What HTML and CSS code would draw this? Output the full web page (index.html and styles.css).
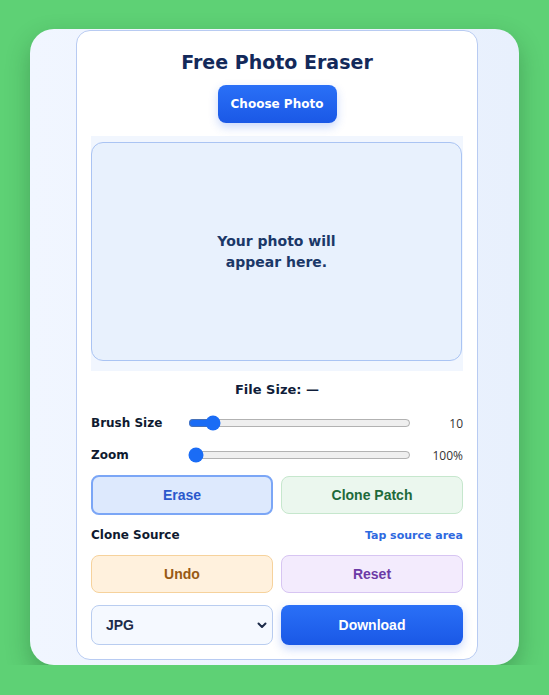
FILE: index.html
```html
<!DOCTYPE html>
<html lang="en">

<head>
    <meta charset="UTF-8">
    <meta name="viewport" content="width=device-width, initial-scale=1.0">
    <title>Free Photo Eraser</title>
    <link rel="stylesheet" href="styles.css">
</head>

<body>

    <div class="shell">
        <div class="eraser_card">
            <h1 class="eraser_title">Free Photo Eraser</h1>
            <div class="choose_wrap">
                <button class="btn_primary choose_btn">Choose Photo</button>
            </div>

            <div class="preview_wrap">
                <div class="preview_box">
                    <p class="preview_text">Your photo will<br>appear here.</p>
                </div>
            </div>

            <div class="file_size">File Size: —</div>

            <div class="sliders">
                <div class="slider_row">
                    <label class="row_label">Brush Size</label>
                    <input type="range" class="slider" min="2" max="100" value="10">
                    <span class="slider_value">10</span>
                </div>
                <div class="slider_row">
                    <label class="row_label">Zoom</label>
                    <input type="range" class="slider" min="100" max="400" value="100">
                    <span class="slider_value">100%</span>
                </div>
            </div>

            <div class="btn_pair">
                <button class="tool_btn erase_btn">Erase</button>
                <button class="tool_btn clone_btn">Clone Patch</button>
            </div>

            <div class="clone_row">
                <span class="row_label">Clone Source</span>
                <span class="clone_hint">Tap source area</span>
            </div>

            <div class="btn_pair history_pair">
                <button class="tool_btn undo_btn">Undo</button>
                <button class="tool_btn reset_btn">Reset</button>
            </div>

            <div class="btn_pair last_pair">
                <div class="format_select">
                    <span>JPG</span>
                    <svg width="12" height="12" viewBox="0 0 12 12">
                        <path d="M2.5 4.5 L6 8 L9.5 4.5" fill="none" stroke="#1d2c4a" stroke-width="2" stroke-linecap="round" stroke-linejoin="round" />
                    </svg>
                </div>
                <button class="btn_primary download_btn">Download</button>
            </div>
        </div>
    </div>

</body>

</html>
```

FILE: styles.css
```css
body {
    margin: 0;
    background: #5ed175;
    font-family: "DejaVu Sans", sans-serif;
    color: #0f1d3a;
}

.shell {
    margin: 29px 30px 0 30px;
    width: 489px;
    box-sizing: border-box;
    padding: 1px 41px 5px 46px;
    background: linear-gradient(90deg, #f1f6ff, #e8f0fd);
    border-radius: 24px;
    box-shadow: 0 10px 24px rgba(20, 60, 30, 0.3);
}

.eraser_card {
    background: #fff;
    border: 1px solid #b8cbf2;
    border-radius: 14px;
    padding: 16px 14px 14px 14px;
}

.eraser_title {
    margin: 0;
    text-align: center;
    font-size: 19px;
    font-weight: bold;
    color: #13295a;
    line-height: 30px;
}

.choose_wrap {
    display: flex;
    justify-content: center;
    margin-top: 8px;
}

.btn_primary {
    border: none;
    color: #fff;
    font-weight: bold;
    background: linear-gradient(180deg, #2a70f7, #1a58e6);
    box-shadow: 0 4px 10px rgba(40, 100, 240, 0.25);
    cursor: pointer;
}

.choose_btn {
    width: 119px;
    height: 38px;
    border-radius: 8px;
    font-family: "DejaVu Sans", sans-serif;
    font-size: 12px;
}

.preview_wrap {
    margin-top: 13px;
    background: #f1f6fe;
    padding: 6px 1px 10px 0;
}

.preview_box {
    height: 217px;
    background: #e8f1fd;
    border: 1px solid #aac4f3;
    border-radius: 12px;
    display: flex;
    align-items: center;
    justify-content: center;
}

.preview_text {
    margin: 0;
    text-align: center;
    font-size: 14px;
    font-weight: bold;
    line-height: 21px;
    color: #1b3868;
}

.file_size {
    text-align: center;
    font-size: 13px;
    font-weight: bold;
    color: #0f1d3a;
    margin-top: 10px;
    line-height: 18px;
}

.sliders {
    margin-top: 8px;
}

.slider_row {
    display: grid;
    grid-template-columns: 97px 223px 1fr;
    align-items: center;
    height: 32px;
}

.row_label {
    font-size: 12px;
    font-weight: bold;
    color: #0f1a30;
}

.slider {
    margin: 0;
    width: 223px;
    accent-color: #1a6cf5;
}

.slider_value {
    text-align: right;
    font-family: "Open Sans", sans-serif;
    font-size: 12px;
    color: #333;
}

.btn_pair {
    display: grid;
    grid-template-columns: 1fr 1fr;
    gap: 8px;
    margin-top: 4px;
}

.tool_btn {
    height: 38px;
    border-radius: 8px;
    font-family: "Liberation Sans", Arial, sans-serif;
    font-size: 14px;
    font-weight: bold;
    cursor: pointer;
}

.erase_btn {
    height: 40px;
    background: #dde9fd;
    border: 2px solid #7ba6f6;
    color: #2a58cc;
}

.clone_btn {
    margin-top: 1px;
    background: #ebf7ee;
    border: 1px solid #c6e7cd;
    color: #1e6a3a;
}

.clone_row {
    display: flex;
    justify-content: space-between;
    align-items: center;
    height: 40px;
}

.clone_hint {
    font-size: 11px;
    font-weight: bold;
    color: #2e69e0;
}

.history_pair {
    margin-top: 0;
}

.undo_btn {
    background: #fff1dd;
    border: 1px solid #f6d29c;
    color: #985a14;
}

.reset_btn {
    background: #f3ebfd;
    border: 1px solid #d7c5f2;
    color: #6c3aa6;
}

.last_pair {
    margin-top: 12px;
}

.format_select {
    height: 40px;
    box-sizing: border-box;
    background: #f5f9ff;
    border: 1px solid #b9cdf0;
    border-radius: 8px;
    display: flex;
    align-items: center;
    justify-content: space-between;
    padding: 0 4px 0 14px;
    font-family: "Liberation Sans", Arial, sans-serif;
    font-size: 14px;
    font-weight: bold;
    color: #1d2c4a;
}

.download_btn {
    height: 40px;
    border-radius: 8px;
    font-family: "Liberation Sans", Arial, sans-serif;
    font-size: 14px;
}
```
